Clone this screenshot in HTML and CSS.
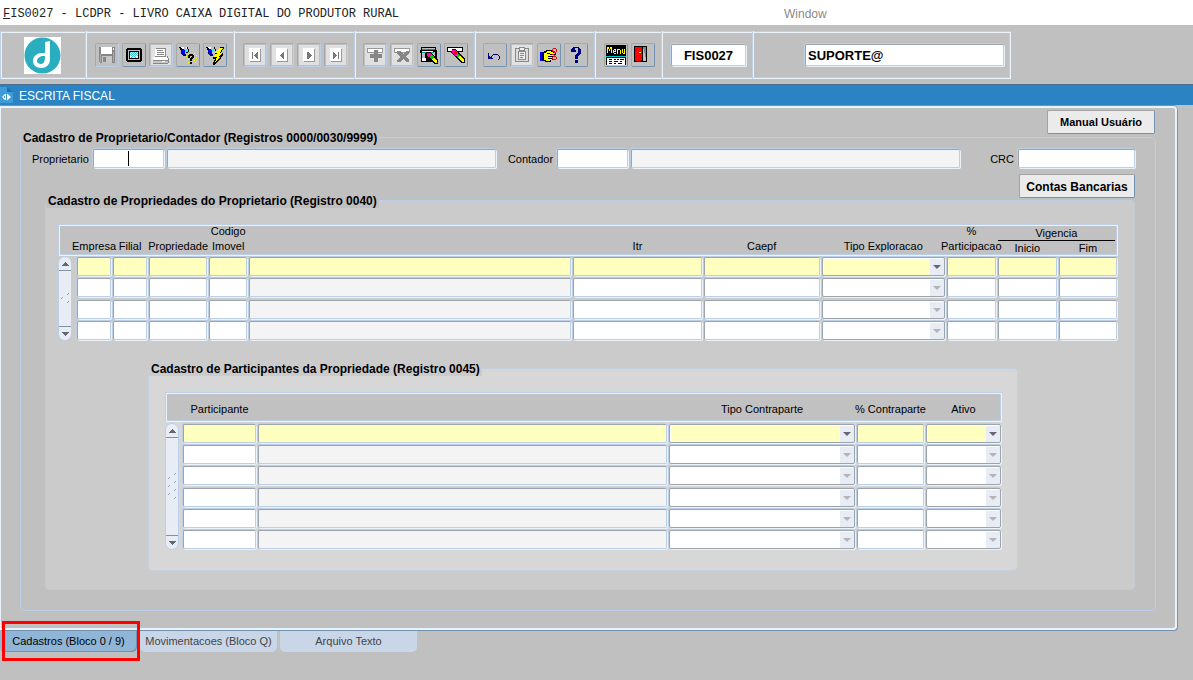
FILE: index.html
```html
<!DOCTYPE html>
<html lang="pt-BR">
<head>
<meta charset="utf-8">
<title>FIS0027 - LCDPR</title>
<link rel="stylesheet" href="styles.css">
</head>
<body>
<header class="menubar">
  <h1 class="menubar-title"><u>F</u>IS0027 - LCDPR - LIVRO CAIXA DIGITAL DO PRODUTOR RURAL</h1>
  <a class="menubar-window" href="#">Window</a>
</header>

<div class="toolbar" role="toolbar" aria-label="Ferramentas">
  <div class="tool-group logo-group">
    <svg class="logo" viewBox="0 0 37 37" role="img" aria-label="Logo"><rect width="37" height="37" fill="#fff"/><circle cx="18.500" cy="18.500" r="18" fill="#2badc0"/><path d="M21 5l5-1v18c0 6-4 9-9 9-5 0-8-3-8-7 0-5 4-8 9-8l3 0z" fill="#fff"/><path d="M20 19c-4 0-7 2-7 5 0 2 2 3 4 3 3 0 4-3 4-8z" fill="#2badc0"/></svg>
  </div>
  <div class="tool-group">
    <button class="tool off" aria-label="Salvar"><svg viewBox="0 0 24 24"><path fill="#868686" d="M4 4h16v16H5l-1-1z"/><path fill="#fff" d="M6 4h11v7H6zM18 5h1v2h-1z"/><path fill="#c6c6c6" d="M7 13h10v7H7z"/><path fill="#868686" d="M8 14h3v5H8z"/><path fill="#aaa" d="M5 11h1v8H5zM18 9h1v10h-1z"/></svg></button>
    <button class="tool" aria-label="Tela"><svg viewBox="0 0 24 24"><path d="M5 5h14v1h1v12h-1v1H5v-1H4V6h1z"/><path fill="#c0c0c0" d="M6 7h12v10H6z"/><path d="M7 8h10v8H7z"/><path fill="#e4f6f6" d="M8 9h8v6H8z"/><path fill="#3cc" d="M8 9h1v1H8zM10 9h1v1h-1zM12 9h1v1h-1zM14 9h1v1h-1zM9 10h1v1H9zM11 10h1v1h-1zM13 10h1v1h-1zM15 10h1v1h-1zM8 11h1v1H8zM10 11h1v1h-1zM12 11h1v1h-1zM14 11h1v1h-1zM9 12h1v1H9zM11 12h1v1h-1zM13 12h1v1h-1zM15 12h1v1h-1zM10 13h1v1h-1zM12 13h1v1h-1zM9 14h1v1H9zM13 14h1v1h-1z"/></svg></button>
    <button class="tool off" aria-label="Imprimir"><svg viewBox="0 0 24 24"><path fill="#e0e0e0" d="M2 2h20v20H2z"/><path fill="#888" d="M7 5h10v9H6v-1h1z"/><path fill="#fff" d="M6 6h10v7H6zM4 14h15v3H4z"/><path fill="#888" d="M8 7h6v1H8zM8 9h7v1H8zM8 11h7v1H8zM18 13h1v2h-1zM4 17h15v1H4zM4 20h15v1H4zM19 15h1v5h-1z"/><path fill="#c4c4c4" d="M4 18h15v2H4z"/><path fill="#fff" d="M13 18h3v1h-3z"/></svg></button>
    <button class="tool" aria-label="Consultar"><svg viewBox="0 0 24 24"><path fill="#fff" d="M4 4h4v2H4z"/><path d="M3 4h2v1H3zM4 5h2v2H4zM6 6h3v1H6zM7 12h3v1H7z"/><path fill="#00f" d="M5 7h4v4H5z"/><path fill="#0ff" d="M8 6h3v3H9V7H8z"/><path fill="#008" d="M6 11h4v1H6zM5 8h1v3H5z"/><path fill="#fff" d="M10 4h1v2h-1z"/><path d="M11 4h1v2h-1zM12 6h1v3h-1zM10 9h2v1h-2z"/><path fill="#ff0" d="M12 11h1v1h-1zM18 10h1v1h-1zM10 13h1v1h-1zM20 12h1v1h-1zM12 16h1v1h-1zM18 17h1v1h-1zM12 19h1v1h-1zM19 19h1v1h-1zM20 15h1v1h-1z"/><path d="M13 11h4v1h1v3h-1v1h-1v2h-2v-3h1v-1h1v-1h-2v2h-2v-3h1zM14 19h2v2h-2z"/></svg></button>
    <button class="tool" aria-label="Executar consulta"><svg viewBox="0 0 24 24"><path fill="#fff" d="M4 4h4v2H4z"/><path d="M3 4h2v1H3zM4 5h2v2H4zM6 6h3v1H6zM7 12h3v1H7z"/><path fill="#00f" d="M5 7h4v4H5z"/><path fill="#0ff" d="M8 6h3v3H9V7H8z"/><path fill="#008" d="M6 11h4v1H6zM5 8h1v3H5z"/><path d="M11 4h1v2h-1zM12 6h1v2h-1z"/><path d="M17 4h4v1l-3 5h2v2l-3 3h1v1l-7 6h-1v-2l2-4h-2v-1l3-4h-1v-1z"/><path fill="#ff0" d="M16 5h4l-3 5h2l-3 4h1l-5 5 2-5h-3l3-4h-2z"/></svg></button>
  </div>
  <div class="tool-group">
    <button class="tool off" aria-label="Primeiro"><svg viewBox="0 0 24 24"><use href="#page"/><path fill="#777" d="M9 9h1v7H9zM14 9h1v7h-1v-1h-1v-1h-1v-1h-1v-1h1v-1h1v-1h1z"/></svg></button>
    <button class="tool off" aria-label="Anterior"><svg viewBox="0 0 24 24"><use href="#page"/><path fill="#777" d="M13 9h1v7h-1v-1h-1v-1h-1v-1h-1v-1h1v-1h1v-1h1z"/></svg></button>
    <button class="tool off" aria-label="Próximo"><svg viewBox="0 0 24 24"><use href="#page"/><path fill="#777" d="M10 9h2v1h1v1h1v1h1v1h-1v1h-1v1h-1v1h-2z"/></svg></button>
    <button class="tool off" aria-label="Último"><svg viewBox="0 0 24 24"><use href="#page"/><path fill="#777" d="M9 9h1v1h1v1h1v1h1v1h-1v1h-1v1h-1v1H9zM14 9h1v7h-1z"/></svg></button>
  </div>
  <div class="tool-group tight">
    <button class="tool off" aria-label="Inserir"><svg viewBox="0 0 24 24"><path fill="#e0e0e0" d="M2 2h20v20H2z"/><path fill="#999" d="M4 5h16v5H4z"/><path fill="#fff" d="M5 6h14v3H5z"/><path fill="#868686" d="M11 7h4v4h4v4h-4v4h-4v-4H7v-4h4z"/></svg></button>
    <button class="tool off" aria-label="Remover"><svg viewBox="0 0 24 24"><path fill="#e0e0e0" d="M2 2h20v20H2z"/><path fill="#999" d="M4 5h16v5H4z"/><path fill="#fff" d="M5 6h14v3H5z"/><path fill="#868686" d="M7 8h3l3 3 3-3h3v2l-3 4 3 3v2h-3l-3-3-3 3H7v-2l3-3-3-4z"/></svg></button>
    <button class="tool" aria-label="Limpar bloco"><svg viewBox="0 0 24 24"><path d="M4 4h15v3h1v11h-3v1H4v-9H3V7h1z"/><path fill="#c0c0c0" d="M5 5h13v1H5zM5 10h3v8H5zM15 9h3v8h-3z"/><path fill="#099" d="M5 6h13v1H5zM5 9h12v1H5z"/><path fill="#fff" d="M5 8h11v1H5zM5 15h4v3H5z"/><path d="M9 9h5l7 8v4h-3L9 13z"/><path fill="#f0a" d="M10 10h3l2 2-3 2-2-1z"/><path fill="#0c0" d="M14 12h2l1 2-2 2-2-1z"/><path fill="#ff0" d="M17 15l3 3v2h-2l-3-4z"/></svg></button>
    <button class="tool" aria-label="Limpar registro"><svg viewBox="0 0 24 24"><path d="M3 4h16v5H3z"/><path fill="#fff" d="M4 5h14v3H4z"/><path d="M8 6h4l9 10v4h-3L7 10z"/><path fill="#f0a" d="M8 7h3l3 3-3 3-3-4z"/><path fill="#e00" d="M11 8l2 2-2 2-1-1z"/><path fill="#0c0" d="M14 10l2 3-2 1-2-1z"/><path fill="#ff0" d="M16 13l4 4v2h-2l-4-5z"/></svg></button>
  </div>
  <div class="tool-group tight">
    <button class="tool" aria-label="Desfazer"><svg viewBox="0 0 24 24"><path fill="#000084" d="M5 10h1v3h1v1h2v1h1v1H5zM8 13h1v-1h1v-1h5v1h1v1h1v3h-1v1h-1v-1h1v-3h-1v-1h-5v1H9v1H8z"/></svg></button>
    <button class="tool off" aria-label="Colar"><svg viewBox="0 0 24 24"><path fill="#e2e2e2" d="M2 2h20v20H2z"/><path fill="#888" d="M5 5h14v14H5z"/><path fill="#ddd" d="M6 6h12v12H6z"/><path fill="#888" d="M8 8h8v9H8zM9 4h6v4H9z"/><path fill="#eee" d="M9 9h6v7H9zM10 5h4v2h-4z"/><path fill="#888" d="M10 10h4v1h-4zM10 12h4v1h-4zM10 14h3v1h-3z"/></svg></button>
    <button class="tool" aria-label="Editar"><svg viewBox="0 0 24 24"><path d="M6 9h1V8h2V7h6v1h2v2h2v2h-3v5h-2v2H8v-1H6z"/><path fill="#00f" d="M3 9h3v9H3z"/><path fill="#008" d="M5 9h1v9H5z"/><path fill="#ff0" d="M7 10h2V9h1V8h4v1h2v1h2v1h-5v1h3v1h-2v1h2v1h-2v1h1v1h-2v1H9v-1H7z"/><path d="M10 10h3v1h-3zM11 13h3v1h-3zM11 15h3v1h-3z"/><path fill="#f00" d="M16 5h3v1h-3zM15 6h1v2h-1zM19 6h1v3h-1zM16 8h2v1h-2zM17 9h2v1h-2zM16 13h3v1h-3zM15 14h1v2h-1zM19 14h1v2h-1zM16 16h3v1h-3zM15 11h2v1h-2zM17 12h1v1h-1z"/></svg></button>
    <button class="tool" aria-label="Ajuda"><svg viewBox="0 0 24 24"><path fill="#000084" d="M9 4h6v1h1v1h1v5h-1v1h-1v1h-1v3h-3v-4h1v-1h1v-1h1V5h-3v2h1v2H7V6h1V5h1zM11 17h3v3h-3z"/></svg></button>
  </div>
  <div class="tool-group">
    <button class="tool" aria-label="Menu"><svg viewBox="0 0 24 24"><path d="M2 2h20v11H2z"/><path fill="none" stroke="#ff0" d="M3.500 10V3.500M4.500 4v2M5.500 6v2M6.500 4v2M7.500 3.500V10M10 10.500h2M9.500 10V6.500M10 6.500h2M11.500 7v1.500H10M13.500 11V6M14 6.500h2M16.500 7v4M18.500 6v4M19 10.500h2M20.500 6v4"/><path fill="#0cc" d="M2 13h20v1H2z"/><path d="M2 14h20v8H2z"/><path fill="#fff" d="M3 15h18v7H3z"/><path d="M5 16h3v1H5zM10 16h2v1h-2zM13 16h2v1h-2zM16 16h4v1h-4zM5 18h3v1H5zM10 18h4v1h-4zM16 18h2v1h-2zM5 20h3v1H5zM10 20h2v1h-2zM14 20h4v1h-4z"/></svg></button>
    <button class="tool" aria-label="Sair"><svg viewBox="0 0 24 24"><path d="M3 3h13v16H3z"/><path fill="#c0c0c0" d="M11 4h4v14h-4z"/><path fill="#868686" d="M12 4h3v12z"/><path fill="#f00" d="M4 4h7v12l-2 2H4z"/><path fill="#ff0" d="M8 9h2v1H8z"/><path d="M11 4h1v15h-1z"/></svg></button>
  </div>
  <div class="tool-group"><input class="field tool-field code" aria-label="Programa" value="FIS0027"></div>
  <div class="tool-group user-group"><input class="field tool-field user" aria-label="Usuário" value="SUPORTE@"></div>
</div>

<svg class="defs" aria-hidden="true"><symbol id="page" viewBox="0 0 24 24"><path fill="#e0e0e0" d="M2 2h20v20H2z"/><path fill="#999" d="M7 6h11v13H7z"/><path fill="#fff" d="M6 5h11v13H6z"/></symbol></svg>

<div class="window-title">
  <svg class="doc-icon" viewBox="0 0 13 16" aria-hidden="true"><path fill="#3f9ad8" d="M0 0h7l6 5v11H0z"/><path fill="#1b6fae" d="M7 0l6 5H7z"/><path fill="#fff" d="M7 6.500l4 3.500-4 3.500zM5 7h1v6H5l-3-3zM4 9v2h1V9z"/></svg>
  <h2>ESCRITA FISCAL</h2>
</div>

<main class="canvas">
  <button class="push manual">Manual Usuário</button>
  <fieldset class="group group-main">
    <legend>Cadastro de Proprietario/Contador (Registros 0000/0030/9999)</legend>
    <div class="owner-row">
      <label for="prop">Proprietario</label>
      <input class="field code-field caret" id="prop">
      <input class="field wide ro" aria-label="Nome do proprietario" readonly>
      <label class="spaced" for="cont">Contador</label>
      <input class="field code-field" id="cont">
      <input class="field wide ro" aria-label="Nome do contador" readonly>
      <label class="crc-label" for="crc">CRC</label>
      <input class="field crc" id="crc">
    </div>
    <button class="push contas">Contas Bancarias</button>

    <fieldset class="group group-properties">
      <legend>Cadastro de Propriedades do Proprietario (Registro 0040)</legend>
      <table class="records properties">
        <colgroup><col class="w18"><col class="w36"><col class="w36"><col class="w60"><col class="w40"><col class="w324"><col class="w130"><col class="w118"><col class="w125"><col class="w51"><col class="w61"><col class="w60"></colgroup>
        <thead>
          <tr><td rowspan="2"></td><th rowspan="2"><span>Empresa</span></th><th rowspan="2"><span>Filial</span></th><th rowspan="2"><span>Propriedade</span></th><th rowspan="2"><span>Codigo<br>Imovel</span></th><td rowspan="2"></td><th rowspan="2"><span>Itr</span></th><th rowspan="2"><span>Caepf</span></th><th rowspan="2"><span>Tipo Exploracao</span></th><th rowspan="2"><span>%<br>Participacao</span></th><th colspan="2" class="span-head"><span>Vigencia</span></th></tr>
          <tr class="sub-head"><th><span>Inicio</span></th><th><span>Fim</span></th></tr>
        </thead>
        <tbody>
          <tr class="current"><td rowspan="4"><div class="scroll"><button aria-label="Subir"><svg viewBox="0 0 8 4"><path d="M4 0l4 4H0z"/></svg></button><div class="track"><svg class="grip" viewBox="0 0 8 12"><path d="M6 2l2-2M0 6l2-2M6 10l2-2"/></svg></div><button aria-label="Descer"><svg viewBox="0 0 8 4"><path d="M0 0h8L4 4z"/></svg></button></div></td><td><input class="field" aria-label="Empresa"></td><td><input class="field" aria-label="Filial"></td><td><input class="field" aria-label="Propriedade"></td><td><input class="field" aria-label="Codigo Imovel"></td><td><input class="field ro" aria-label="Descricao" readonly></td><td><input class="field" aria-label="Itr"></td><td><input class="field" aria-label="Caepf"></td><td><select class="field" aria-label="Tipo Exploracao"></select></td><td><input class="field" aria-label="% Participacao"></td><td><input class="field" aria-label="Inicio"></td><td><input class="field" aria-label="Fim"></td></tr>
          <tr class="tall"><td><input class="field" aria-label="Empresa"></td><td><input class="field" aria-label="Filial"></td><td><input class="field" aria-label="Propriedade"></td><td><input class="field" aria-label="Codigo Imovel"></td><td><input class="field ro" aria-label="Descricao" readonly></td><td><input class="field" aria-label="Itr"></td><td><input class="field" aria-label="Caepf"></td><td><select class="field" aria-label="Tipo Exploracao" disabled></select></td><td><input class="field" aria-label="% Participacao"></td><td><input class="field" aria-label="Inicio"></td><td><input class="field" aria-label="Fim"></td></tr>
          <tr><td><input class="field" aria-label="Empresa"></td><td><input class="field" aria-label="Filial"></td><td><input class="field" aria-label="Propriedade"></td><td><input class="field" aria-label="Codigo Imovel"></td><td><input class="field ro" aria-label="Descricao" readonly></td><td><input class="field" aria-label="Itr"></td><td><input class="field" aria-label="Caepf"></td><td><select class="field" aria-label="Tipo Exploracao" disabled></select></td><td><input class="field" aria-label="% Participacao"></td><td><input class="field" aria-label="Inicio"></td><td><input class="field" aria-label="Fim"></td></tr>
          <tr><td><input class="field" aria-label="Empresa"></td><td><input class="field" aria-label="Filial"></td><td><input class="field" aria-label="Propriedade"></td><td><input class="field" aria-label="Codigo Imovel"></td><td><input class="field ro" aria-label="Descricao" readonly></td><td><input class="field" aria-label="Itr"></td><td><input class="field" aria-label="Caepf"></td><td><select class="field" aria-label="Tipo Exploracao" disabled></select></td><td><input class="field" aria-label="% Participacao"></td><td><input class="field" aria-label="Inicio"></td><td><input class="field" aria-label="Fim"></td></tr>
        </tbody>
      </table>

      <fieldset class="group group-members">
        <legend>Cadastro de Participantes da Propriedade (Registro 0045)</legend>
        <table class="records members">
          <colgroup><col class="w17"><col class="w75"><col class="w411"><col class="w188"><col class="w69"><col class="w77"></colgroup>
          <thead><tr><td></td><th><span>Participante</span></th><td></td><th><span>Tipo Contraparte</span></th><th><span>% Contraparte</span></th><th><span>Ativo</span></th></tr></thead>
          <tbody>
            <tr class="current"><td rowspan="6"><div class="scroll"><button aria-label="Subir"><svg viewBox="0 0 8 4"><path d="M4 0l4 4H0z"/></svg></button><div class="track"><svg class="grip grip-long" viewBox="0 0 8 28"><path d="M6 2l2-2M0 6l2-2M6 10l2-2M0 14l2-2M6 18l2-2M0 22l2-2M6 26l2-2"/></svg></div><button aria-label="Descer"><svg viewBox="0 0 8 4"><path d="M0 0h8L4 4z"/></svg></button></div></td><td><input class="field" aria-label="Participante"></td><td><input class="field ro" aria-label="Nome" readonly></td><td><select class="field" aria-label="Tipo Contraparte"></select></td><td><input class="field" aria-label="% Contraparte"></td><td><select class="field" aria-label="Ativo"></select></td></tr>
            <tr><td><input class="field" aria-label="Participante"></td><td><input class="field ro" aria-label="Nome" readonly></td><td><select class="field" aria-label="Tipo Contraparte" disabled></select></td><td><input class="field" aria-label="% Contraparte"></td><td><select class="field" aria-label="Ativo" disabled></select></td></tr>
            <tr class="tall"><td><input class="field" aria-label="Participante"></td><td><input class="field ro" aria-label="Nome" readonly></td><td><select class="field" aria-label="Tipo Contraparte" disabled></select></td><td><input class="field" aria-label="% Contraparte"></td><td><select class="field" aria-label="Ativo" disabled></select></td></tr>
            <tr><td><input class="field" aria-label="Participante"></td><td><input class="field ro" aria-label="Nome" readonly></td><td><select class="field" aria-label="Tipo Contraparte" disabled></select></td><td><input class="field" aria-label="% Contraparte"></td><td><select class="field" aria-label="Ativo" disabled></select></td></tr>
            <tr><td><input class="field" aria-label="Participante"></td><td><input class="field ro" aria-label="Nome" readonly></td><td><select class="field" aria-label="Tipo Contraparte" disabled></select></td><td><input class="field" aria-label="% Contraparte"></td><td><select class="field" aria-label="Ativo" disabled></select></td></tr>
            <tr><td><input class="field" aria-label="Participante"></td><td><input class="field ro" aria-label="Nome" readonly></td><td><select class="field" aria-label="Tipo Contraparte" disabled></select></td><td><input class="field" aria-label="% Contraparte"></td><td><select class="field" aria-label="Ativo" disabled></select></td></tr>
          </tbody>
        </table>
      </fieldset>
    </fieldset>
  </fieldset>
</main>

<nav class="tabs" role="tablist">
  <div class="tab-slot"><button class="tab active" role="tab" aria-selected="true">Cadastros (Bloco 0 / 9)</button><span class="highlight"></span></div>
  <button class="tab" role="tab">Movimentacoes (Bloco Q)</button>
  <button class="tab" role="tab">Arquivo Texto</button>
</nav>
</body>
</html>
```
FILE: styles.css
```css
:root {
  --face: #c0c0c0;
  --line: #bccfe6;
  --light: #eaf2fb;
  --dark: #9ea4ab;
  --steel: #7392b2;
}

* { box-sizing: border-box; }

body {
  margin: 0;
  min-height: 100vh;
  background: var(--face);
  color: #000;
  font: 11px/15px "Liberation Sans", Arial, sans-serif;
}

button, input, select { margin: 0; padding: 0; font: inherit; color: inherit; border-radius: 0; outline: 0; }
svg { display: block; shape-rendering: crispEdges; }
.defs { display: block; width: 0; height: 0; position: absolute; }

.menubar {
  display: grid;
  grid-template-columns: 784px 1fr;
  align-items: center;
  height: 25px;
  padding-top: 3px;
  background: #fff;
}
.menubar-title { margin: 0; padding-left: 3px; font: 12px/15px "Liberation Mono", "Courier New", monospace; color: #222; }
.menubar-window { padding-top: 1px; font-size: 12px; color: #8a8a8a; text-decoration: none; }

.toolbar {
  display: flex;
  width: max-content;
  height: 48px;
  margin-top: 6px;
  box-shadow: inset 1px 1px var(--line), inset -1px -1px var(--light), inset 2px 2px var(--light), inset -2px -2px var(--line);
}
.tool-group {
  display: flex;
  align-items: center;
  gap: 3px;
  padding: 0 7px 0 8px;
  border-right: 1px solid var(--light);
  box-shadow: inset -1px 0 var(--line);
}
.tool-group.tight { padding-left: 7px; }
.tool-group.logo-group { padding: 0 25px 0 24px; }
.logo { width: 37px; height: 37px; shape-rendering: auto; }
.tool {
  width: 24px;
  height: 24px;
  border: 1px solid #a8a8a8;
  border-right-color: var(--steel);
  border-bottom-color: var(--steel);
  border-radius: 2px;
  background: none;
}
.tool.off { border-right-color: var(--line); border-bottom-color: var(--line); }
.tool svg { width: 24px; height: 24px; margin: -1px; }
.tool.off svg { clip-path: inset(1px); }
.tool-group.user-group { padding: 0 7px 0 51px; border: 0; box-shadow: none; }

.field {
  display: block;
  width: 100%;
  min-width: 0;
  height: 19px;
  border: 1px solid var(--dark);
  border-right-color: var(--line);
  border-bottom-color: var(--line);
  border-radius: 2px;
  background: #fff;
  box-shadow: 1px 1px var(--light), -1px -1px var(--line);
}
.field.ro { background: #f4f4f4; }
.tool-field { height: 22px; font-size: 13px; font-weight: bold; }
.tool-field.code { width: 75px; text-align: center; }
.tool-field.user { width: 199px; padding-left: 2px; }

.window-title {
  display: flex;
  align-items: center;
  gap: 6px;
  height: 21px;
  margin-top: 5px;
  border-top: 1px solid #4a6f94;
  background: #2b83c4;
  color: #fff;
}
.window-title h2 { margin: 0; padding-top: 2px; font-size: 12px; font-weight: normal; }
.doc-icon { width: 13px; height: 16px; shape-rendering: auto; }

.canvas {
  display: flex;
  flex-direction: column;
  margin: 1px 16px 0 0;
  padding: 2px 19px 17px;
  border: solid var(--light);
  border-width: 2px 2px 2px 1px;
  border-radius: 0 4px 4px 0;
  box-shadow: 1px 1px var(--steel), 0 -1px var(--steel);
}

.push {
  align-self: flex-end;
  height: 24px;
  border: 1px solid #a3a3a3;
  border-right-color: var(--steel);
  border-bottom-color: var(--steel);
  border-radius: 2px;
  background: #ebebeb;
  font-weight: bold;
}
.manual { width: 108px; margin: 0 1px -4px 0; }
.contas { display: block; width: 116px; margin: 6px 0 -5px auto; padding-top: 2px; font-size: 12px; }

.group {
  min-width: 0;
  margin: 0;
  border: 1px solid var(--line);
  border-radius: 5px;
}
.group legend { padding: 0 2px; height: 15px; line-height: 17px; font-size: 12px; font-weight: bold; background: var(--face); }
.group-main { padding: 4px 20px 20px 11px; }
.group-main > legend { margin-left: -11px; }
.group-properties { margin-left: 13px; padding: 16px 16px 18px 12px; border-color: #c3cad2; border-top-color: var(--line); background: #cbcbcb; }
.group-properties > legend { margin-left: -12px; }
.group-members { margin: 20px 100px 0 90px; padding: 16px 15px 20px 16px; border-color: #c3d0df; background: #d7d7d7; }
.group-members > legend { margin-left: -16px; background: #cbcbcb; }

.owner-row { display: flex; align-items: center; height: 19px; }
.owner-row label { flex: none; margin-right: 4px; padding-top: 1px; }
.code-field { flex: none; width: 71px; margin-right: 3px; }
.wide { flex: 1; }
.owner-row .spaced { margin-left: 12px; }
.owner-row .crc-label { margin-left: 30px; }
.crc { flex: none; width: 117px; }
.caret { background: linear-gradient(#000, #000) center / 1px 15px no-repeat #fff; }

.records { width: 100%; table-layout: fixed; border-spacing: 0; }
.records th, .records td { padding: 0; }
.records th { font-weight: normal; white-space: nowrap; vertical-align: bottom; text-align: center; }
.records thead {
  background: #c1c1c1;
  box-shadow: inset 1px 1px var(--line), inset -1px -1px var(--light), inset 2px 2px var(--light), inset -2px -2px var(--line);
}
/* Captions may be wider than their column and stay centred over it. */
.records th span { display: block; margin: 0 -12px; padding-bottom: 2px; }
.records tbody tr { height: 21px; }
.records tbody tr.tall { height: 22px; }
.records tbody td { padding: 1px; vertical-align: top; }
.records tbody td[rowspan] { padding: 0; height: 1px; }
.properties .span-head { height: 17px; padding: 2px 3px 0 1px; }
.records .span-head span { margin: 0; padding: 0; border-bottom: 1px solid #000; line-height: 14px; }
.sub-head th { height: 15px; line-height: 13px; }
.records .sub-head span { padding-bottom: 1px; }
.members thead th { height: 30px; }
.members th span { padding-bottom: 5px; }
.members tbody::before { content: ""; display: block; height: 1px; }
.current .field { background-color: #ffffbf; }

select.field {
  appearance: none;
  border-color: var(--dark);
  box-shadow: inset 1px 1px #fff, 1px 1px var(--light), -1px -1px var(--line);
  background-image:
    url("data:image/svg+xml,%3Csvg xmlns='http://www.w3.org/2000/svg' width='8' height='4'%3E%3Cpath fill='%23667' d='M0 0h8L4 4z'/%3E%3C/svg%3E"),
    linear-gradient(#e8edf5, #e8edf5);
  background-repeat: no-repeat;
  background-position: right 3px center, right 0 top 1px;
  background-size: 8px 4px, 14px 100%;
}
select.field:disabled {
  opacity: 1;
  background-image:
    url("data:image/svg+xml,%3Csvg xmlns='http://www.w3.org/2000/svg' width='8' height='4'%3E%3Cpath fill='%23b4b4b4' d='M0 0h8L4 4z'/%3E%3C/svg%3E"),
    linear-gradient(#e8edf5, #e8edf5);
}

.scroll {
  display: flex;
  flex-direction: column;
  width: 14px;
  height: 100%;
  border: 1px solid var(--line);
  border-radius: 7px;
  background: #e8edf5;
  overflow: hidden;
}
.scroll button { display: grid; place-items: center; flex: none; height: 13px; border: 0; background: none; }
.scroll button svg { width: 8px; height: 4px; fill: #667; }
.track { display: grid; flex: 1; place-items: center; border: solid #8393a6; border-width: 1px 0; }
.grip { width: 8px; height: 12px; fill: none; stroke: #8fa4ba; shape-rendering: auto; }
.grip-long { height: 28px; }

.w17 { width: 17px; } .w18 { width: 18px; } .w36 { width: 36px; } .w40 { width: 40px; }
.w51 { width: 51px; } .w60 { width: 60px; } .w61 { width: 61px; } .w69 { width: 69px; }
.w75 { width: 75px; } .w77 { width: 77px; } .w118 { width: 118px; } .w125 { width: 125px; }
.w130 { width: 130px; } .w188 { width: 188px; } .w324 { width: 324px; } .w411 { width: 411px; }

.tabs { display: flex; gap: 3px; margin-top: 1px; }
.tab-slot { position: relative; }
.tab { width: 137px; height: 21px; border: 0; border-radius: 0 0 5px 5px; background: #c9d6e8; color: #444; white-space: nowrap; }
.tab.active { background: #91b5d6; color: #000; box-shadow: inset -1px -1px var(--steel); }
.highlight { position: absolute; left: 2px; top: -10px; width: 138px; height: 40px; border: 3px solid #f00; pointer-events: none; }
```
